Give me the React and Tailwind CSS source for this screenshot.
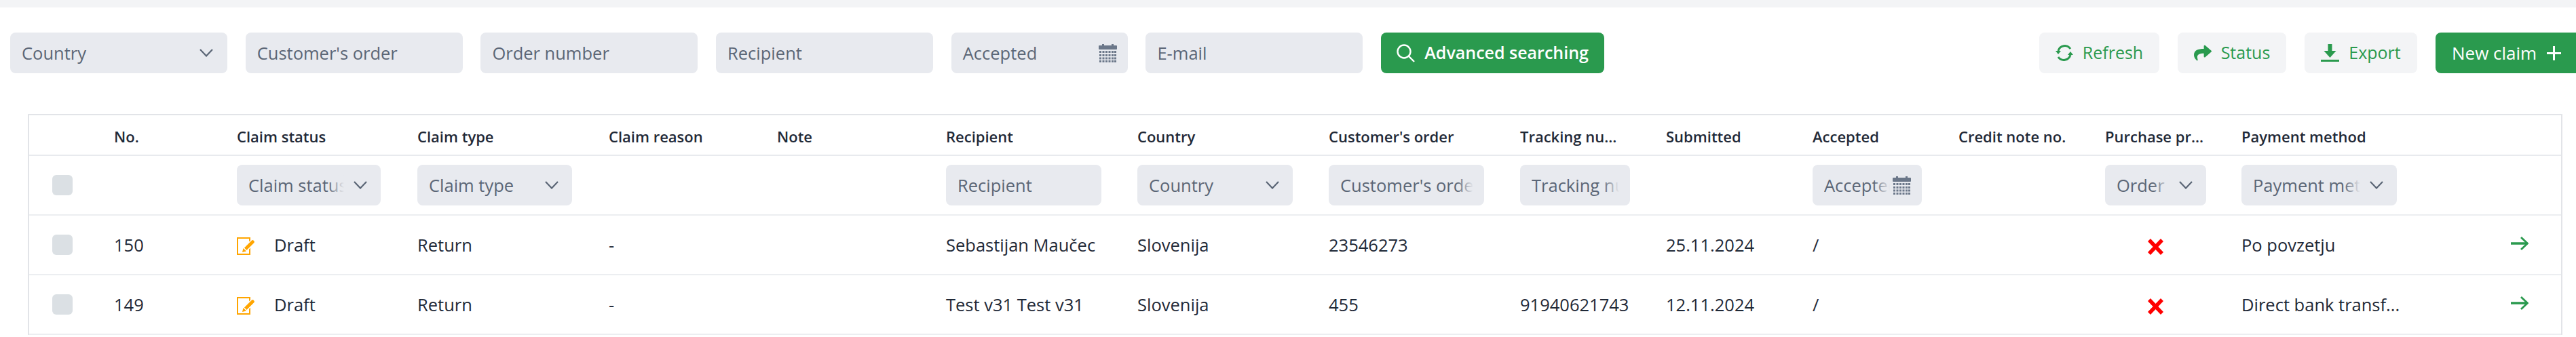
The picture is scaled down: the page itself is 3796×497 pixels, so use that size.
import React from 'react';
import { FaShare } from 'react-icons/fa';

const gridCols = 'grid grid-cols-[125px_181px_266px_282px_248px_249px_282px_282px_282px_215px_216px_215px_216px_201px_247px_1fr] items-center';

const Chevron = () => (
  <svg width="20" height="12" viewBox="0 0 20 12" fill="none" stroke="#5b6676" strokeWidth="2.2" className="shrink-0">
    <path d="M1 1l9 9.5L19 1" />
  </svg>
);

const Calendar = () => (
  <svg width="27" height="28" viewBox="0 0 27 28" fill="#6b7789" className="shrink-0">
    <rect x="0" y="3" width="27" height="6" rx="1" />
    <rect x="5" y="1" width="3" height="3" />
    <rect x="19" y="1" width="3" height="3" />
    {[11, 16, 20.5, 25].map((y) =>
      [1, 5.5, 10, 14.5, 19, 23].map((x) => <rect key={`${x}-${y}`} x={x} y={y} width="3" height="3" />)
    )}
  </svg>
);

const Field = ({ label, width, chevron, calendar }) => (
  <div className={`${width} flex h-[60px] shrink-0 items-center justify-between rounded-lg bg-[#e8eaef] pl-[17px] text-[25.5px] text-[#5b6676] ${calendar ? 'pr-[16px]' : 'pr-[21px]'}`}>
    <span className="whitespace-nowrap">{label}</span>
    {chevron && <Chevron />}
    {calendar && <Calendar />}
  </div>
);

const FilterField = ({ label, width, chevron, calendar, fade }) => (
  <div className={`${width} flex h-[60px] items-center rounded-lg bg-[#e8eaef] pl-[17px] text-[25.5px] text-[#5b6676] ${chevron ? 'pr-[20px]' : 'pr-[16px]'}`}>
    <span className="relative min-w-0 flex-1 overflow-hidden whitespace-nowrap">
      {label}
      {fade && <span className="absolute top-0 right-0 h-full w-[24px] bg-gradient-to-r from-transparent to-[#e8eaef]" />}
    </span>
    {chevron && <span className="ml-[14px] flex shrink-0"><Chevron /></span>}
    {calendar && <span className="ml-[4px] flex shrink-0"><Calendar /></span>}
  </div>
);

const ToolButton = ({ width, icon, children }) => (
  <button className={`${width} flex h-[60px] items-center justify-center gap-[14px] rounded-lg bg-[#f3f4f6] text-[25px] font-medium text-[#2a9a4e]`}>
    {icon}
    {children}
  </button>
);

const Checkbox = () => <div className="ml-[34px] h-[30px] w-[30px] rounded-md bg-[#dbe0e4]" />;

const DraftIcon = () => (
  <svg width="28" height="26" viewBox="0 0 28 26" className="mt-[3px] shrink-0">
    <rect x="1" y="1" width="18" height="24" fill="none" stroke="#ffa500" strokeWidth="2" />
    <path d="M10 15.500L21.500 4c1-1 2.500-1 4 .5s1.500 3 .5 4L14.500 20z" fill="#ffa500" stroke="#fff" strokeWidth="1.500" />
    <path d="M8 22l1.500-6 4.500 4.500z" fill="#ffa500" />
  </svg>
);

const headers = ['No.', 'Claim status', 'Claim type', 'Claim reason', 'Note', 'Recipient', 'Country', "Customer's order", 'Tracking nu...', 'Submitted', 'Accepted', 'Credit note no.', 'Purchase pr...', 'Payment method'];

const rows = [
  { no: '150', recipient: 'Sebastijan Maučec', order: '23546273', tracking: '', submitted: '25.11.2024', payment: 'Po povzetju' },
  { no: '149', recipient: 'Test v31 Test v31', order: '455', tracking: '91940621743', submitted: '12.11.2024', payment: 'Direct bank transf...' },
];

const App = () => {
  return (
    <div className="h-[497px] w-[3796px] overflow-hidden bg-white font-['Open_Sans',sans-serif] text-[#1f2937]">
      <div className="h-[11px] bg-[#f3f4f6]" />

      <div className="mt-[37px] flex pl-[15px]">
        <div className="flex gap-[26.7px]">
          <Field label="Country" width="w-[320px]" chevron />
          <Field label="Customer's order" width="w-[320px]" />
          <Field label="Order number" width="w-[320px]" />
          <Field label="Recipient" width="w-[320px]" />
          <Field label="Accepted" width="w-[260px]" calendar />
          <Field label="E-mail" width="w-[320px]" />
          <button className="flex h-[60px] w-[329px] items-center justify-center gap-[14px] rounded-lg bg-[#2a9a4e] text-[25px] font-semibold text-white">
            <svg width="27" height="27" viewBox="0 0 27 27" fill="none" stroke="currentColor" strokeWidth="2.4">
              <circle cx="11" cy="11" r="9.5" />
              <path d="M18 18l8 8" />
            </svg>
            Advanced searching
          </button>
        </div>
        <div className="ml-auto flex gap-[27px]">
          <ToolButton
            width="w-[177px]"
            icon={
              <svg width="26" height="26" viewBox="0 0 26 26" fill="currentColor">
                <path d="M4 10a10 10 0 0 1 18-3M22 16a10 10 0 0 1-18 3" fill="none" stroke="currentColor" strokeWidth="3" />
                <path d="M0 10h8l-4 5z" />
                <path d="M26 16h-8l4-5z" />
              </svg>
            }
          >
            Refresh
          </ToolButton>
          <ToolButton width="w-[160px]" icon={<FaShare size={26} />}>
            Status
          </ToolButton>
          <ToolButton
            width="w-[166px]"
            icon={
              <svg width="27" height="26" viewBox="0 0 27 26" fill="currentColor">
                <path d="M10.500 0h6v10h6L13.500 20 4.500 10h6z" />
                <rect x="0" y="23" width="27" height="3" />
              </svg>
            }
          >
            Export
          </ToolButton>
          <button className="flex h-[60px] w-[207px] items-center gap-[15px] rounded-l-lg bg-[#2a9a4e] pl-[24px] text-[26px] font-medium text-white">
            New claim
            <svg width="21" height="21" viewBox="0 0 21 21" fill="none" stroke="currentColor" strokeWidth="3">
              <path d="M10.500 0v21M0 10.500h21" />
            </svg>
          </button>
        </div>
      </div>

      <div className="mt-[60px] ml-[41px] w-[3735px] border-x-2 border-t-2 border-[#e2e4e8]">
        <div className={`${gridCols} h-[60px] border-b-2 border-[#e8eaee] pt-[4px] text-[22px] font-semibold`}>
          <div />
          {headers.map((h) => (
            <div key={h} className="whitespace-nowrap">{h}</div>
          ))}
          <div />
        </div>

        <div className={`${gridCols} h-[88px] border-b-2 border-[#eceef1]`}>
          <Checkbox />
          <div />
          <FilterField label="Claim status" width="w-[212px]" chevron fade />
          <FilterField label="Claim type" width="w-[228px]" chevron />
          <div />
          <div />
          <FilterField label="Recipient" width="w-[229px]" />
          <FilterField label="Country" width="w-[229px]" chevron />
          <FilterField label="Customer's order" width="w-[229px]" fade />
          <FilterField label="Tracking number" width="w-[162px]" fade />
          <div />
          <FilterField label="Accepted" width="w-[161px]" calendar fade />
          <div />
          <FilterField label="Order" width="w-[149px]" chevron fade />
          <FilterField label="Payment method" width="w-[229px]" chevron fade />
          <div />
        </div>

        {rows.map((r) => (
          <div key={r.no} className={`${gridCols} h-[88px] border-b-2 border-[#eceef1] text-[25.5px]`}>
            <Checkbox />
            <div>{r.no}</div>
            <div className="flex items-center gap-[27px]">
              <DraftIcon />
              Draft
            </div>
            <div>Return</div>
            <div>-</div>
            <div />
            <div className="whitespace-nowrap">{r.recipient}</div>
            <div>Slovenija</div>
            <div>{r.order}</div>
            <div>{r.tracking}</div>
            <div>{r.submitted}</div>
            <div>/</div>
            <div />
            <div className="mt-[6px] flex w-[149px] justify-center">
              <svg width="23" height="24" viewBox="0 0 23 24" fill="none" stroke="#ff0000" strokeWidth="5.500">
                <path d="M2 2l19 20M21 2L2 22" />
              </svg>
            </div>
            <div className="whitespace-nowrap">{r.payment}</div>
            <div className="flex justify-end pr-[48px]">
              <svg width="26" height="20" viewBox="0 0 26 20" fill="none" stroke="#2a9a4e" className="mb-[4px]">
                <path d="M0 10h23" strokeWidth="3.500" />
                <path d="M15 1l9.500 9-9.500 9" strokeWidth="2.800" />
              </svg>
            </div>
          </div>
        ))}
      </div>
    </div>
  );
};

export default App;
